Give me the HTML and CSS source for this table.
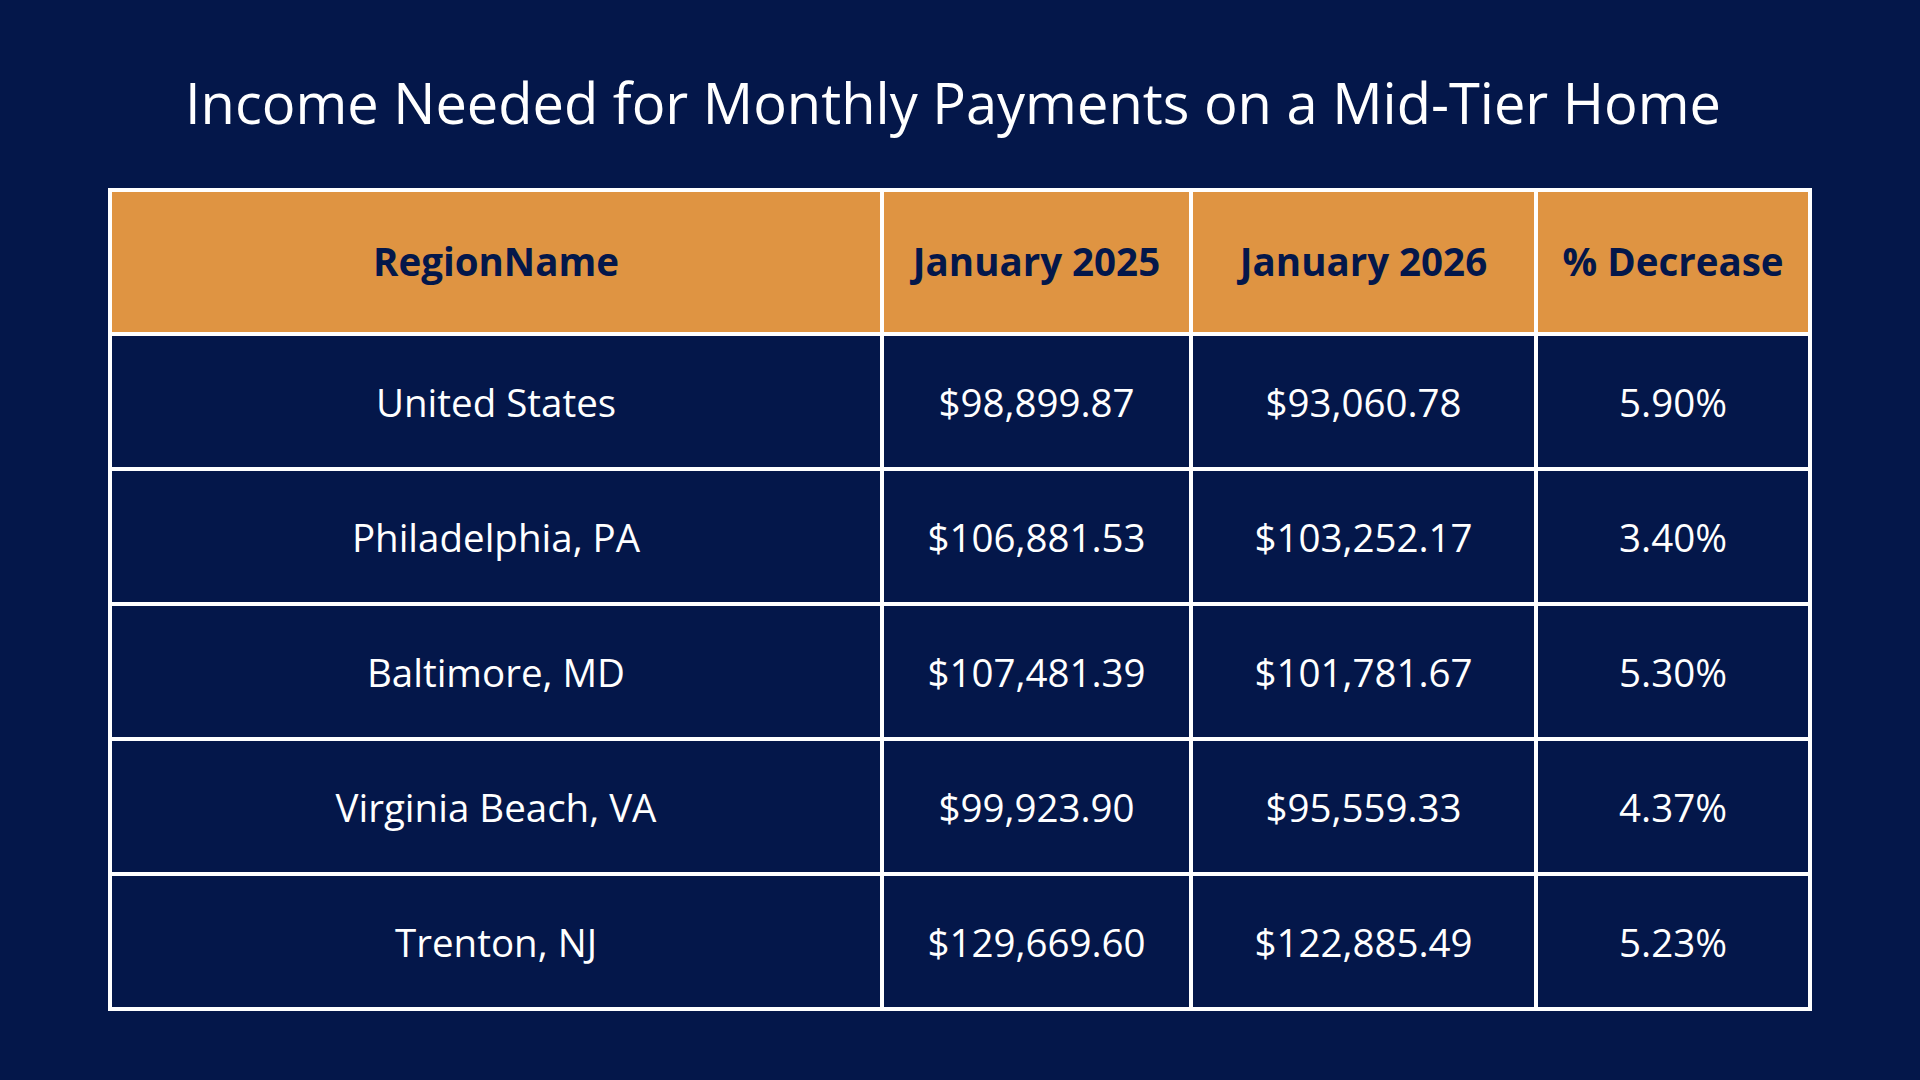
FILE: index.html
```html
<!DOCTYPE html>
<html lang="en">
<head>
<meta charset="utf-8">
<title>Income Needed for Monthly Payments on a Mid-Tier Home</title>
<link rel="stylesheet" href="styles.css">
</head>
<body>
<main class="page">
  <h1 class="title">Income Needed for Monthly Payments on a Mid-Tier Home</h1>
  <table class="data">
    <colgroup>
      <col class="c1"><col class="c2"><col class="c3"><col class="c4">
    </colgroup>
    <thead>
      <tr><th>RegionName</th><th>January 2025</th><th>January 2026</th><th>% Decrease</th></tr>
    </thead>
    <tbody>
      <tr><td>United States</td><td>$98,899.87</td><td>$93,060.78</td><td>5.90%</td></tr>
      <tr><td>Philadelphia, PA</td><td>$106,881.53</td><td>$103,252.17</td><td>3.40%</td></tr>
      <tr><td>Baltimore, MD</td><td>$107,481.39</td><td>$101,781.67</td><td>5.30%</td></tr>
      <tr><td>Virginia Beach, VA</td><td>$99,923.90</td><td>$95,559.33</td><td>4.37%</td></tr>
      <tr><td>Trenton, NJ</td><td>$129,669.60</td><td>$122,885.49</td><td>5.23%</td></tr>
    </tbody>
  </table>
</main>
</body>
</html>
```
FILE: styles.css
```css
html, body {
  margin: 0;
  padding: 0;
  background: #04174a;
}
body {
  width: 1920px;
  height: 1080px;
  overflow: hidden;
  font-family: "Open Sans", "Noto Sans", sans-serif;
  color: #ffffff;
}
.page {
  padding: 64px 108px 0 108px;
}
.title {
  margin: 0;
  font-size: 56px;
  font-weight: 400;
  line-height: 76px;
  text-align: center;
  padding-right: 14px;
  color: #ffffff;
}
.data {
  margin-top: 48px;
  width: 1704px;
  border-collapse: separate;
  border-spacing: 4px;
  background: #ffffff;
  table-layout: fixed;
}
.c1 { width: 768px; }
.c2 { width: 305px; }
.c3 { width: 341px; }
.c4 { width: 270px; }
.data th, .data td {
  padding: 0;
  text-align: center;
  vertical-align: middle;
}
.data th {
  height: 138px;
  padding-bottom: 2px;
  background: #df9442;
  color: #04174a;
  font-size: 38.5px;
  font-weight: 700;
}
.data td {
  height: 131px;
  background: #04174a;
  color: #ffffff;
  font-size: 38.5px;
  font-weight: 400;
}
```
